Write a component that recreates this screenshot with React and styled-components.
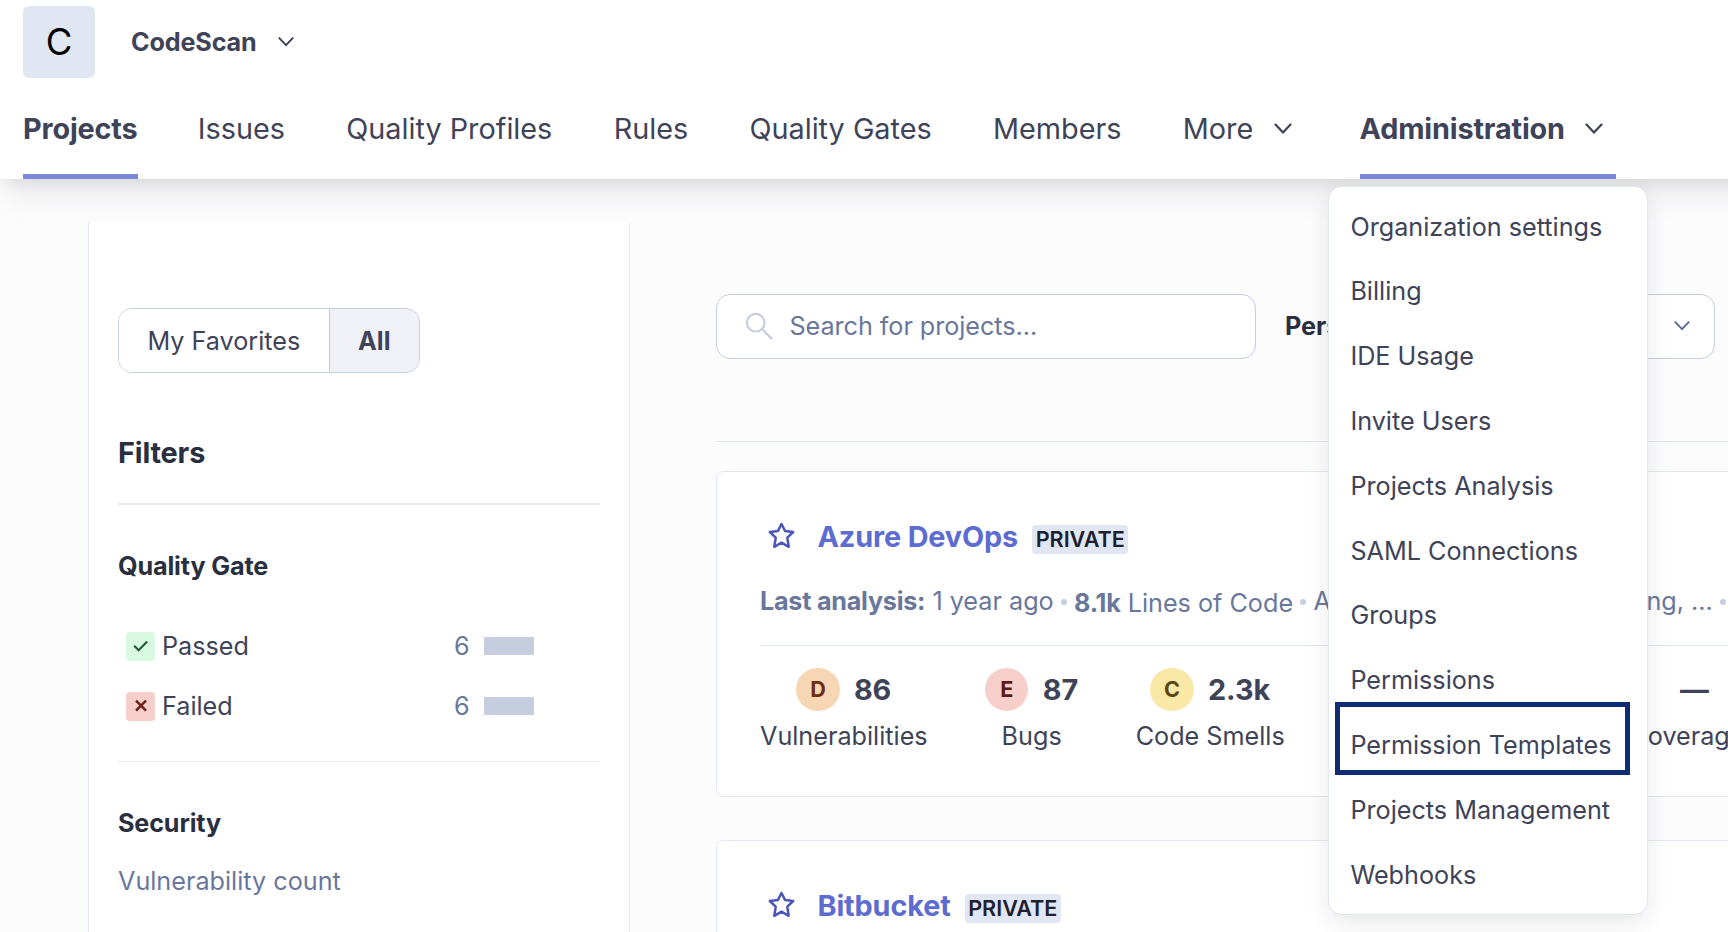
import React from "react";
import styled, { createGlobalStyle } from "styled-components";

const Global = createGlobalStyle`
  *, *::before, *::after { box-sizing: border-box; }
  body {
    margin: 0;
    background: #fcfcfd;
    color: #3e4357;
    font: 400 25.2px/36px Inter, "Liberation Sans", sans-serif;
    -webkit-font-smoothing: antialiased;
  }
`;

const Page = styled.div`
  position: relative;
  height: 932px;
  overflow: hidden;
  display: flex;
  flex-direction: column;
`;

const Header = styled.header`
  position: relative;
  z-index: 1;
  flex: none;
  height: 179px;
  margin-right: -40px;
  padding-left: 23px;
  background: #fff;
  box-shadow: 0 22px 29px -7px rgba(29, 33, 47, 0.09), 0 7px 14px -4px rgba(29, 33, 47, 0.09);
`;

const OrgRow = styled.div`
  display: flex;
  align-items: center;
  height: 84px;
`;

const Avatar = styled.div`
  width: 72px;
  height: 72px;
  border-radius: 6px;
  background: #e1e6f3;
  color: #000;
  font-size: 36.5px;
  line-height: 72px;
  text-align: center;
`;

const OrgName = styled.span`
  margin: 0 21px 0 36px;
  font-weight: 650;
  letter-spacing: -0.15px;
`;

const Nav = styled.nav`
  display: flex;
  gap: 61.3px;
  height: 95px;
`;

const NavItem = styled.a`
  display: flex;
  align-items: center;
  height: 95px;
  margin-right: ${(p) => (p.$menu && !p.$active ? -6 : p.$active ? -1 : 0)}px;
  padding-bottom: ${(p) => (p.$active ? 1 : 6)}px;
  border-bottom: ${(p) => (p.$active ? "5px solid #7b87d9" : "0")};
  font-size: 28.8px;
  font-weight: ${(p) => (p.$active ? 650 : 400)};
  letter-spacing: ${(p) => (p.$active ? -0.15 : 0)}px;
  white-space: nowrap;
  svg { margin: 0 12.5px 0 20.5px; }
`;

const Body = styled.div`
  display: flex;
  flex: 1;
  min-height: 0;
`;

const Sidebar = styled.aside`
  position: relative;
  z-index: 2;
  flex: none;
  width: 542px;
  margin: 43px 0 0 88px;
  padding: 86px 29px 0;
  border: solid #e1e6f3;
  border-width: 0 1px;
  background: #fff;
`;

const Toggle = styled.div`
  display: inline-flex;
  height: 65px;
  border: 1px solid #c5cddf;
  border-radius: 14px;
  overflow: hidden;
  vertical-align: top;
`;

const ToggleOption = styled.button`
  padding: 0 28.4px;
  border: 0;
  border-left: ${(p) => (p.$active ? "1px solid #c5cddf" : "0")};
  background: ${(p) => (p.$active ? "#eff1f7" : "#fff")};
  color: inherit;
  font: inherit;
  font-weight: ${(p) => (p.$active ? 650 : 400)};
`;

const FiltersTitle = styled.h2`
  margin: 62px 0 0;
  padding-bottom: 32px;
  border-bottom: 2px solid #ebebed;
  color: #2a2f40;
  font-size: 28.8px;
  font-weight: 650;
  letter-spacing: -0.15px;
  line-height: 36px;
`;

const Facet = styled.section`
  padding: 43px 0 37px;
  border-bottom: 1px solid #ebebed;
`;

const FacetTitle = styled.h3`
  margin: 0;
  color: #2a2f40;
  font-size: 25.2px;
  font-weight: 650;
  letter-spacing: -0.15px;
  line-height: 36px;
`;

const FacetNote = styled.div`
  margin-top: 22px;
  color: #69779b;
`;

const FacetList = styled.div`
  display: flex;
  flex-direction: column;
  gap: 24px;
  margin-top: 44px;
`;

const FacetRow = styled.div`
  display: flex;
  align-items: center;
  height: 36px;
  padding-left: 8px;
`;

const StatusBox = styled.span`
  display: flex;
  align-items: center;
  justify-content: center;
  width: 29px;
  height: 29px;
  margin: 0 7px 0 0;
  border-radius: 4px;
  background: ${(p) => (p.$ok ? "#d9f9e1" : "#f6cfcb")};
`;

const FacetLabel = styled.span`
  width: 292px;
`;

const FacetCount = styled.span`
  width: 30px;
  color: #69779b;
`;

const FacetBar = styled.span`
  width: 50px;
  height: 18px;
  background: #c5cdde;
`;

const Main = styled.main`
  flex: none;
  width: 1100px;
  margin-left: 86px;
  padding-top: 115px;
`;

const Controls = styled.div`
  display: flex;
  align-items: center;
  padding-bottom: 82px;
  border-bottom: 1px solid #e1e6f3;
`;

const SearchBox = styled.div`
  display: flex;
  align-items: center;
  width: 540px;
  height: 65px;
  padding: 0 0 2px 28px;
  border: 1px solid #c5cdde;
  border-radius: 14px;
  background: #fff;
  color: #69779b;
  letter-spacing: -0.05px;
  svg { margin-right: 16.5px; }
`;

const SelectLabel = styled.span`
  width: 181px;
  margin-left: 29px;
  padding-bottom: 2px;
  color: #2a2f40;
  font-weight: 650;
`;

const SelectBox = styled.div`
  display: flex;
  align-items: center;
  justify-content: flex-end;
  width: 249px;
  height: 65px;
  padding: 0 24px 2px 0;
  border: 1px solid #c5cdde;
  border-radius: 14px;
  background: #fff;
  color: #5d6c93;
`;

const Card = styled.article`
  height: 326px;
  margin-top: ${(p) => (p.$first ? 29 : 43)}px;
  padding: 47px 43px 0;
  border: 1px solid #e1e6f3;
  border-radius: 7px;
  background: #fff;
`;

const CardHead = styled.div`
  display: flex;
  align-items: center;
  height: 36px;
  padding-left: 7px;
  svg { margin-bottom: 3px; }
`;

const ProjectName = styled.a`
  margin: 0 14px 0 21.5px;
  color: #5d6cd0;
  font-size: 28.8px;
  font-weight: 650;
  letter-spacing: -0.13px;
`;

const Badge = styled.span`
  height: 29px;
  margin-top: 5px;
  padding: 0 3.6px;
  border-radius: 4px;
  background: #e1e6f3;
  color: #1d212f;
  font-size: 21.6px;
  font-weight: 560;
  line-height: 29px;
`;

const Meta = styled.div`
  display: flex;
  height: 63px;
  margin-top: 28px;
  border-bottom: 1px solid #e1e6f3;
  color: #69779b;
  white-space: nowrap;
  b { font-weight: 650; letter-spacing: -0.25px; }
`;

const MetaPart = styled.span`
  padding-top: ${(p) => (p.$low ? 2 : 0)}px;
  width: ${(p) => (p.$w ? p.$w + "px" : "auto")};
  text-align: ${(p) => (p.$end ? "right" : "left")};
`;

const Dot = styled.i`
  width: 6px;
  height: 6px;
  margin: 16px 7.2px 0;
  border-radius: 50%;
  background: #c5cdde;
`;

const Metrics = styled.div`
  display: flex;
  gap: 57.6px;
  margin-top: 22px;
`;

const Metric = styled.div`
  display: flex;
  flex-direction: column;
  align-items: center;
  gap: 7px;
  margin-left: ${(p) => p.$shift || 0}px;
`;

const MetricTop = styled.div`
  display: flex;
  align-items: center;
  gap: 14.4px;
  height: 43px;
  padding-left: ${(p) => (p.$bare ? 15 : 0)}px;
  font-size: 28.8px;
  font-weight: 650;
  letter-spacing: -0.1px;
`;

const Rating = styled.span`
  width: 43.2px;
  height: 43.2px;
  border-radius: 50%;
  background: ${(p) => p.$bg};
  color: ${(p) => p.$fg};
  font-size: 21.6px;
  line-height: 43.2px;
  text-align: center;
`;

const Menu = styled.div`
  position: absolute;
  z-index: 3;
  left: 1328px;
  top: 186px;
  width: 320px;
  height: 729px;
  padding: 7.6px 0;
  border: 1px solid #e1e6f3;
  border-radius: 14px;
  background: #fff;
  box-shadow: 0 7px 22px rgba(29, 33, 47, 0.1);
`;

const MenuItem = styled.div`
  height: 64.8px;
  padding-left: 21.4px;
  line-height: 64.8px;
`;

const Outline = styled.div`
  position: absolute;
  left: 6px;
  top: 515px;
  width: 295px;
  height: 73px;
  border: 5px solid #0e2c74;
`;

const Chevron = ({ size = 16 }) => (
  <svg width={size} height={size} viewBox="0 0 18 18" fill="none" stroke="currentColor" strokeWidth="2.2" strokeLinecap="round" strokeLinejoin="round">
    <path d="M1.5 4.6 9 12.6 16.5 4.6" />
  </svg>
);

const SearchIcon = () => (
  <svg width="28" height="28" viewBox="0 0 28 28" fill="none" stroke="#c5cdde" strokeWidth="2.2" strokeLinecap="round">
    <circle cx="10.7" cy="10.7" r="8.8" />
    <path d="M17.2 17.2 26.4 26.4" />
  </svg>
);

const Star = () => (
  <svg width="29" height="29" viewBox="0 0 29 29" fill="none" stroke="#4b56bb" strokeWidth="2.5" strokeLinejoin="round">
    <path d="M14.5 3 18 9.9 26.2 11 20.3 16.7 21.7 25.8 14.5 21.7 7.3 25.8 8.7 16.7 2.8 11 11 9.9Z" />
  </svg>
);

const Check = () => (
  <svg width="16" height="16" viewBox="0 0 16 16" fill="none" stroke="#215c34" strokeWidth="2.2">
    <path d="M1.2 7.8 5.6 12.2 14.2 3.4" />
  </svg>
);

const Cross = () => (
  <svg width="14" height="14" viewBox="0 0 14 14" fill="none" stroke="#6f1f17" strokeWidth="2.5">
    <path d="M2 1.6 12 11.6M12 1.6 2 11.6" />
  </svg>
);

const MENU = [
  "Organization settings",
  "Billing",
  "IDE Usage",
  "Invite Users",
  "Projects Analysis",
  "SAML Connections",
  "Groups",
  "Permissions",
  "Permission Templates",
  "Projects Management",
  "Webhooks",
];

const NAV = [
  { label: "Projects", active: true },
  { label: "Issues" },
  { label: "Quality Profiles" },
  { label: "Rules" },
  { label: "Quality Gates" },
  { label: "Members" },
  { label: "More", menu: true },
  { label: "Administration", active: true, menu: true },
];

const METRICS = [
  { rating: "D", bg: "#f7d6b3", fg: "#6f2c13", value: "86", label: "Vulnerabilities" },
  { rating: "E", bg: "#f6cfcb", fg: "#5b1a14", value: "87", label: "Bugs" },
  { rating: "C", bg: "#f9e8a6", fg: "#5c4414", value: "2.3k", label: "Code Smells" },
  { value: "—", label: "Coverage", shift: 287 },
];

export default function App() {
  return (
    <Page>
      <Global />
      <Header>
        <OrgRow>
          <Avatar>C</Avatar>
          <OrgName>CodeScan</OrgName>
          <Chevron />
        </OrgRow>
        <Nav>
          {NAV.map((n) => (
            <NavItem key={n.label} $active={n.active} $menu={n.menu}>
              {n.label}
              {n.menu && <Chevron size={18} />}
            </NavItem>
          ))}
        </Nav>
      </Header>
      <Body>
        <Sidebar>
          <Toggle>
            <ToggleOption>My Favorites</ToggleOption>
            <ToggleOption $active>All</ToggleOption>
          </Toggle>
          <FiltersTitle>Filters</FiltersTitle>
          <Facet>
            <FacetTitle>Quality Gate</FacetTitle>
            <FacetList>
              <FacetRow>
                <StatusBox $ok><Check /></StatusBox>
                <FacetLabel>Passed</FacetLabel>
                <FacetCount>6</FacetCount>
                <FacetBar />
              </FacetRow>
              <FacetRow>
                <StatusBox><Cross /></StatusBox>
                <FacetLabel>Failed</FacetLabel>
                <FacetCount>6</FacetCount>
                <FacetBar />
              </FacetRow>
            </FacetList>
          </Facet>
          <Facet>
            <FacetTitle>Security</FacetTitle>
            <FacetNote>Vulnerability count</FacetNote>
          </Facet>
        </Sidebar>
        <Main>
          <Controls>
            <SearchBox><SearchIcon />Search for projects...</SearchBox>
            <SelectLabel>Perspective</SelectLabel>
            <SelectBox><Chevron /></SelectBox>
          </Controls>
          <Card $first>
            <CardHead>
              <Star />
              <ProjectName>Azure DevOps</ProjectName>
              <Badge>PRIVATE</Badge>
            </CardHead>
            <Meta>
              <MetaPart><b>Last analysis:</b> 1 year ago</MetaPart>
              <Dot />
              <MetaPart $low><b>8.1k</b> Lines of Code</MetaPart>
              <Dot />
              <MetaPart>A</MetaPart>
              <MetaPart $w={382} $end>ng, ...</MetaPart>
              <Dot />
            </Meta>
            <Metrics>
              {METRICS.map((m) => (
                <Metric key={m.label} $shift={m.shift}>
                  <MetricTop $bare={!m.rating}>
                    {m.rating && <Rating $bg={m.bg} $fg={m.fg}>{m.rating}</Rating>}
                    {m.value}
                  </MetricTop>
                  <span>{m.label}</span>
                </Metric>
              ))}
            </Metrics>
          </Card>
          <Card>
            <CardHead>
              <Star />
              <ProjectName>Bitbucket</ProjectName>
              <Badge>PRIVATE</Badge>
            </CardHead>
          </Card>
        </Main>
      </Body>
      <Menu>
        {MENU.map((label) => <MenuItem key={label}>{label}</MenuItem>)}
        <Outline />
      </Menu>
    </Page>
  );
}
